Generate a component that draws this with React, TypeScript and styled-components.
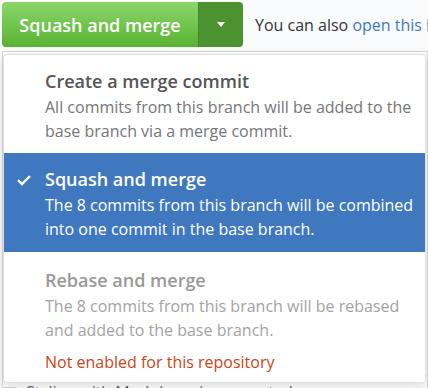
import React from 'react';
import styled, { createGlobalStyle } from 'styled-components';

const GlobalStyle = createGlobalStyle`
  html, body {
    margin: 0;
    padding: 0;
    background: #fafbfc;
    overflow: hidden;
  }
  body {
    font-family: 'Open Sans', 'Noto Sans', 'Liberation Sans', sans-serif;
    color: #333;
  }
`;

const Page = styled.div`
  position: relative;
  width: 428px;
  height: 388px;
  padding: 2px 0 0 2px;
  box-sizing: border-box;
  overflow: hidden;
`;

const MergeRow = styled.div`
  display: flex;
  align-items: center;
  gap: 12px;
  white-space: nowrap;
`;

const ButtonGroup = styled.div`
  display: flex;
  height: 45px;
  border-radius: 4px;
  overflow: hidden;
  flex-shrink: 0;
`;

const MainButton = styled.button`
  width: 196px;
  border: 0;
  padding: 0;
  background: linear-gradient(#8bd76a, #59b233);
  color: #fff;
  font-family: inherit;
  font-size: 18px;
  font-weight: 600;
`;

const CaretButton = styled.button`
  width: 45px;
  border: 0;
  border-left: 1px solid #44892a;
  background: #4d9230;
  display: flex;
  align-items: center;
  justify-content: center;
  padding: 0;
`;

const Caret = styled.span`
  width: 0;
  height: 0;
  border-left: 4.5px solid transparent;
  border-right: 4.5px solid transparent;
  border-top: 5px solid #fff;
`;

const Hint = styled.span`
  font-size: 16px;
  color: #333;
`;

const Link = styled.a`
  color: #4078c0;
  text-decoration: none;
`;

const Editor = styled.div`
  margin-top: 4px;
  background: #fff;
  border: 1px solid #d8d8d8;
  height: 360px;
  display: flex;
  flex-direction: column;
`;

const EditorTabs = styled.div`
  height: 14px;
  border-bottom: 1px solid #e2e2e2;
`;

const EditorBody = styled.div`
  height: 300px;
  border-bottom: 1px solid #e2e2e2;
  margin-top: 8px;
`;

const EditorFooter = styled.div`
  display: flex;
  align-items: center;
  gap: 9px;
  height: 22px;
  padding-top: 5px;
  font-size: 16px;
  color: #666;
`;

const Menu = styled.div`
  position: absolute;
  top: 54px;
  left: 3px;
  width: 423px;
  height: 329px;
  background: #fff;
  border: 1px solid rgba(0, 0, 0, 0.12);
  border-radius: 4px;
  box-shadow: 0 3px 12px rgba(0, 0, 0, 0.15);
  box-sizing: border-box;
  overflow: hidden;
`;

const Item = styled.div<{ $selected?: boolean; $disabled?: boolean }>`
  position: relative;
  padding: ${p => (p.$disabled ? '16px' : '14px')} 8px 10px 41px;
  min-height: ${p => (p.$selected ? '99px' : '98px')};
  box-sizing: border-box;
  background: ${p => (p.$selected ? '#4078c0' : 'transparent')};
  color: ${p => (p.$selected ? '#fff' : p.$disabled ? '#a3a3a3' : '#767676')};
`;

const Title = styled.div<{ $selected?: boolean; $disabled?: boolean }>`
  font-size: 18px;
  font-weight: 600;
  line-height: 24px;
  margin-bottom: 2px;
  color: ${p => (p.$selected ? '#fff' : p.$disabled ? '#999' : '#555')};
`;

const Description = styled.div`
  font-size: 16px;
  line-height: 24px;
`;

const Warning = styled.div`
  margin-top: 8px;
  font-size: 16px;
  line-height: 24px;
  color: #cb4417;
`;

const Check = styled.svg`
  position: absolute;
  left: 12px;
  top: 21px;
`;

export default function App() {
  return (
    <>
      <GlobalStyle />
      <Page>
        <MergeRow>
          <ButtonGroup>
            <MainButton>Squash and merge</MainButton>
            <CaretButton>
              <Caret />
            </CaretButton>
          </ButtonGroup>
          <Hint>
            You can also <Link>open this in GitHub Desktop</Link> or view command line instructions.
          </Hint>
        </MergeRow>
        <Editor>
          <EditorTabs />
          <EditorBody />
          <EditorFooter>
            <svg width="14" height="10" viewBox="0 0 16 10">
              <path
                fill="#555"
                d="M14.85 0H1.15C.52 0 0 .52 0 1.15v7.69C0 9.48.52 10 1.15 10h13.69c.64 0 1.15-.52 1.15-1.15V1.15C16 .52 15.48 0 14.85 0zM9 8H7V5L5.5 7 4 5v3H2V2h2l1.5 2L7 2h2v6zm2.99.5L9.5 5H11V2h2v3h1.5l-2.51 3.5z"
              />
            </svg>
            Styling with Markdown is supported
          </EditorFooter>
        </Editor>
        <Menu>
          <Item>
            <Title>Create a merge commit</Title>
            <Description>
              All commits from this branch will be added to the base branch via a merge commit.
            </Description>
          </Item>
          <Item $selected>
            <Check width="16" height="12" viewBox="0 0 16 12">
              <path d="M2 6.2l4 3.8L14 2" fill="none" stroke="#fff" strokeWidth="2.4" />
            </Check>
            <Title $selected>Squash and merge</Title>
            <Description>
              The 8 commits from this branch will be combined into one commit in the base branch.
            </Description>
          </Item>
          <Item $disabled>
            <Title $disabled>Rebase and merge</Title>
            <Description>
              The 8 commits from this branch will be rebased and added to the base branch.
            </Description>
            <Warning>Not enabled for this repository</Warning>
          </Item>
        </Menu>
      </Page>
    </>
  );
}
